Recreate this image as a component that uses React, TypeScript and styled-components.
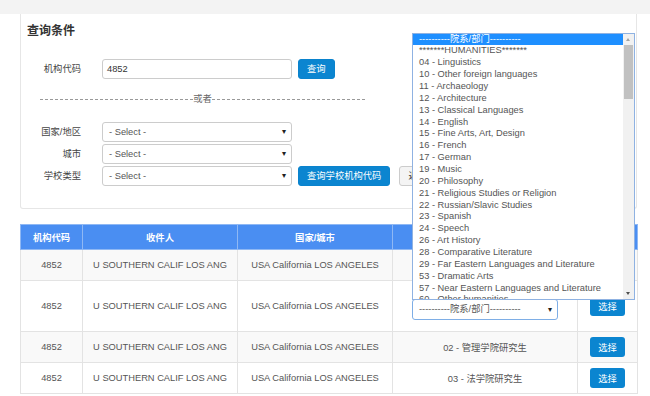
import React from "react";
import styled, { createGlobalStyle } from "styled-components";

const GlobalStyle = createGlobalStyle`
    html, body {
        margin: 0;
        padding: 0;
        background: #fff;
    }
    body {
        font-family: "Liberation Sans", Arial, "Noto Sans CJK SC", sans-serif;
        font-size: 9.3px;
        color: #555;
    }
`;

const TopBar = styled.div`
    height: 14px;
    background-color: #f3f3f3;
`;

const Content = styled.div`
    padding: 0 13px 0 20px;
`;

const Panel = styled.section`
    height: 195px;
    box-sizing: border-box;
    border: 1px solid #e6e6e6;
    border-top: none;
    border-radius: 0 0 3px 3px;
    padding: 9px 6px 0;
`;

const Title = styled.h2`
    margin: 0;
    height: 16px;
    font-size: 12px;
    line-height: 16px;
    font-weight: bold;
    color: #333;
`;

const Form = styled.div`
    margin-top: 20px;
    display: flex;
    flex-direction: column;
    gap: 2px;
`;

const Row = styled.div`
    display: flex;
    align-items: center;
    height: 20px;
`;

const Label = styled.label`
    width: 54px;
    margin-right: 21px;
    text-align: right;
    color: #444;
    line-height: 20px;
    flex-shrink: 0;
`;

const TextInput = styled.div`
    width: 190px;
    height: 20px;
    box-sizing: border-box;
    border: 1px solid #ccc;
    border-radius: 3px;
    padding-left: 4px;
    line-height: 18px;
    color: #333;
    background: #fff;
`;

const FakeSelect = styled.div<{ $width?: number; $focus?: boolean }>`
    position: relative;
    width: ${(p) => p.$width ?? 190}px;
    height: ${(p) => (p.$focus ? 21 : 20)}px;
    box-sizing: border-box;
    border: 1px solid ${(p) => (p.$focus ? "#7eaee6" : "#ccc")};
    border-radius: 3px;
    padding: 0 16px 0 6px;
    line-height: ${(p) => (p.$focus ? 19 : 18)}px;
    color: #555;
    background: #fff;
    text-align: left;
    white-space: nowrap;

    &::after {
        content: "▾";
        position: absolute;
        right: 5px;
        top: 0;
        font-size: 8px;
        color: #222;
    }
`;

const Button = styled.button<{ $gray?: boolean }>`
    height: 20px;
    margin-left: ${(p) => (p.$gray ? 9 : 6)}px;
    padding: 0 8px;
    border: 1px solid ${(p) => (p.$gray ? "#ccc" : "#0a83cd")};
    border-radius: 3px;
    background-color: ${(p) => (p.$gray ? "#f4f4f4" : "#0b85d0")};
    color: ${(p) => (p.$gray ? "#333" : "#fff")};
    font-family: inherit;
    font-size: 9.3px;
    line-height: 18px;
    white-space: nowrap;
`;

const Divider = styled.div`
    display: flex;
    align-items: center;
    width: 325px;
    height: 12px;
    margin: 12px 0 15px 13px;
    line-height: 12px;
    color: #666;

    &::before,
    &::after {
        content: "";
        flex: 1;
        border-top: 1px dashed #999;
    }
`;

const Table = styled.table`
    width: 617px;
    margin-top: 15px;
    border-collapse: collapse;
    table-layout: fixed;
    border: 1px solid #e3e3e3;
`;

const Th = styled.th`
    height: 24px;
    padding: 0;
    background-color: #4a8ef2;
    color: #fff;
    font-weight: bold;
    font-size: 9.3px;
    border: 1px solid #8fb8f4;
    text-align: center;
`;

const Tr = styled.tr<{ $striped?: boolean; $tall?: boolean }>`
    height: ${(p) => (p.$tall ? 51 : 31)}px;
    background-color: ${(p) => (p.$striped ? "#f9f9f9" : "#fff")};
`;

const Td = styled.td`
    padding: 0;
    border: 1px solid #e3e3e3;
    text-align: center;
    vertical-align: middle;
    color: #555;
    white-space: nowrap;
`;

const SelectCell = styled.div`
    position: relative;
    display: inline-block;
    margin-top: 6px;
`;

const PickButton = styled.button`
    width: 35px;
    height: 20px;
    border: none;
    border-radius: 3px;
    background-color: #0b85d0;
    color: #fff;
    font-family: inherit;
    font-size: 9.3px;
    padding: 0;
`;

const ListBox = styled.div`
    position: absolute;
    left: 0;
    bottom: calc(100% - 1px);
    z-index: 10;
    width: 223px;
    height: 267px;
    box-sizing: border-box;
    border: 1px solid #8fb2e2;
    background: #fff;
    display: flex;
    overflow: hidden;
    text-align: left;
`;

const Options = styled.ul`
    flex: 1;
    margin: 0;
    padding: 0;
    list-style: none;
    overflow: hidden;
`;

const Option = styled.li<{ $active?: boolean }>`
    height: 11.86px;
    line-height: 11.86px;
    padding-left: 6px;
    white-space: nowrap;
    color: ${(p) => (p.$active ? "#fff" : "#555")};
    background-color: ${(p) => (p.$active ? "#1e8fff" : "transparent")};
`;

const ScrollTrack = styled.div`
    position: relative;
    width: 11px;
    background-color: #f1f1f1;
`;

const ScrollThumb = styled.div`
    position: absolute;
    left: 1px;
    right: 1px;
    top: 11px;
    height: 54px;
    background-color: #c1c1c1;
`;

const ScrollArrow = styled.span<{ $down?: boolean }>`
    position: absolute;
    left: 3px;
    ${(p) => (p.$down ? "bottom: 4px;" : "top: 4px;")}
    width: 0;
    height: 0;
    border-left: 2.5px solid transparent;
    border-right: 2.5px solid transparent;
    ${(p) => (p.$down ? "border-top: 3px solid #505050;" : "border-bottom: 3px solid #a3a3a3;")}
`;

const DEPT = "----------院系/部门----------";

const options = [
    DEPT,
    "*******HUMANITIES*******",
    "04 - Linguistics",
    "10 - Other foreign languages",
    "11 - Archaeology",
    "12 - Architecture",
    "13 - Classical Languages",
    "14 - English",
    "15 - Fine Arts, Art, Design",
    "16 - French",
    "17 - German",
    "19 - Music",
    "20 - Philosophy",
    "21 - Religious Studies or Religion",
    "22 - Russian/Slavic Studies",
    "23 - Spanish",
    "24 - Speech",
    "26 - Art History",
    "28 - Comparative Literature",
    "29 - Far Eastern Languages and Literature",
    "53 - Dramatic Arts",
    "57 - Near Eastern Languages and Literature",
    "60 - Other humanities",
];

const rows = [
    { dept: "01 - 文理学院研究生" },
    { dept: null },
    { dept: "02 - 管理学院研究生" },
    { dept: "03 - 法学院研究生" },
];

export default function App() {
    return (
        <>
            <GlobalStyle />
            <TopBar />
            <Content>
                <Panel>
                    <Title>查询条件</Title>
                    <Form>
                        <Row>
                            <Label>机构代码</Label>
                            <TextInput>4852</TextInput>
                            <Button>查询</Button>
                        </Row>
                        <Divider>或者</Divider>
                        <Row>
                            <Label>国家/地区</Label>
                            <FakeSelect>- Select -</FakeSelect>
                        </Row>
                        <Row>
                            <Label>城市</Label>
                            <FakeSelect>- Select -</FakeSelect>
                        </Row>
                        <Row>
                            <Label>学校类型</Label>
                            <FakeSelect>- Select -</FakeSelect>
                            <Button>查询学校机构代码</Button>
                            <Button $gray>返回</Button>
                        </Row>
                    </Form>
                </Panel>

                <Table>
                    <colgroup>
                        <col style={{ width: 62 }} />
                        <col style={{ width: 155 }} />
                        <col style={{ width: 155 }} />
                        <col style={{ width: 185 }} />
                        <col style={{ width: 60 }} />
                    </colgroup>
                    <thead>
                        <tr>
                            <Th>机构代码</Th>
                            <Th>收件人</Th>
                            <Th>国家/城市</Th>
                            <Th>院系/部门</Th>
                            <Th>操作</Th>
                        </tr>
                    </thead>
                    <tbody>
                        {rows.map((r, i) => (
                            <Tr key={i} $striped={i % 2 === 0} $tall={r.dept === null}>
                                <Td>4852</Td>
                                <Td>U SOUTHERN CALIF LOS ANG</Td>
                                <Td>USA California LOS ANGELES</Td>
                                <Td>
                                    {r.dept === null ? (
                                        <SelectCell>
                                            <FakeSelect $width={146} $focus>{DEPT}</FakeSelect>
                                            <ListBox>
                                                <Options>
                                                    {options.map((o, j) => (
                                                        <Option key={j} $active={j === 0}>{o}</Option>
                                                    ))}
                                                </Options>
                                                <ScrollTrack>
                                                    <ScrollArrow />
                                                    <ScrollThumb />
                                                    <ScrollArrow $down />
                                                </ScrollTrack>
                                            </ListBox>
                                        </SelectCell>
                                    ) : (
                                        r.dept
                                    )}
                                </Td>
                                <Td><PickButton>选择</PickButton></Td>
                            </Tr>
                        ))}
                    </tbody>
                </Table>
            </Content>
        </>
    );
}
